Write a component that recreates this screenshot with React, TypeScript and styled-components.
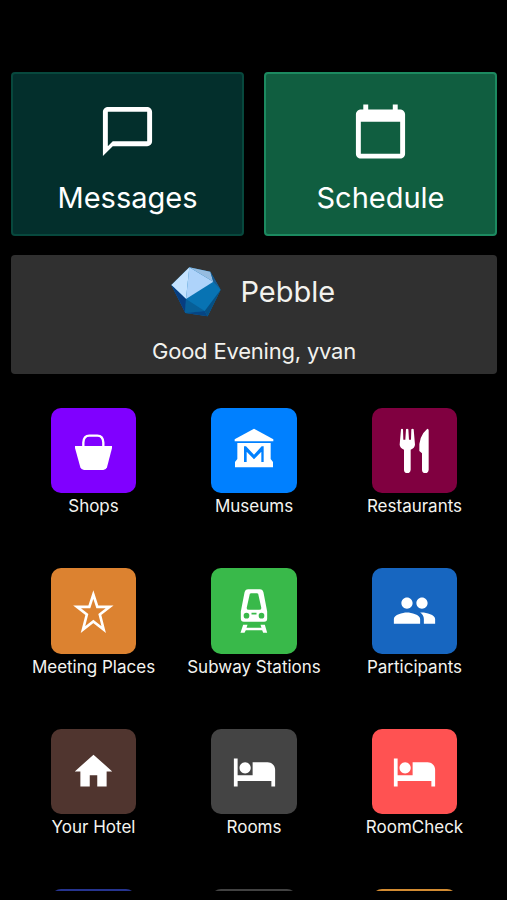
import React from "react";
import styled, { createGlobalStyle } from "styled-components";

const GlobalStyle = createGlobalStyle`
  * { box-sizing: border-box; }
  html, body { margin: 0; background: #000; }
  body { overflow: hidden; }
`;

const Screen = styled.main`
  width: 507px;
  height: 900px;
  padding: 72px 10px 9.5px 11px;
  background: #000;
  color: #fff;
  font-family: Inter, "Liberation Sans", sans-serif;
  display: flex;
  flex-direction: column;
  overflow: hidden;
`;

const CardRow = styled.div`
  display: grid;
  grid-template-columns: 1fr 1fr;
  gap: 20px;
  flex: none;
`;

const Card = styled.button<{ $fill: string; $edge: string }>`
  height: 163.5px;
  padding: 28px 0 0;
  border: 2px solid ${(p) => p.$edge};
  border-radius: 4px;
  background: ${(p) => p.$fill};
  color: #fff;
  font: inherit;
  display: flex;
  flex-direction: column;
  align-items: center;
`;

const CardIcon = styled.svg`
  width: 59px;
  height: 59px;
  fill: #fff;
`;

const CardLabel = styled.span`
  margin-top: 19px;
  font-size: 29px;
  line-height: 36px;
`;

const Assistant = styled.section`
  flex: none;
  height: 118.5px;
  margin-top: 19.5px;
  padding-top: 10.5px;
  border-radius: 4px;
  background: #303030;
  color: #f2f2ee;
  display: flex;
  flex-direction: column;
  align-items: center;
`;

const Brand = styled.div`
  display: flex;
  align-items: center;
  gap: 19px;
  height: 52px;
  margin-right: 1.5px;
`;

const Logo = styled.svg`
  width: 50px;
  height: 50px;
`;

const BrandName = styled.span`
  font-size: 29px;
`;

const Greeting = styled.p`
  margin: 19.5px 0 0;
  font-size: 22px;
  line-height: 28px;
  letter-spacing: -0.2px;
`;

const Apps = styled.nav`
  flex: 1;
  min-height: 0;
  margin: 34px 2px 0;
  display: grid;
  grid-template-columns: repeat(3, 160.5px);
  grid-auto-rows: 160.5px;
  justify-content: center;
  overflow: hidden;
`;

const AppLink = styled.a`
  display: flex;
  flex-direction: column;
  align-items: center;
`;

const Tile = styled.span<{ $fill: string }>`
  width: 85.5px;
  height: 85.5px;
  flex: none;
  border-radius: 10px;
  background: ${(p) => p.$fill};
  display: grid;
  place-items: center;
`;

const TileIcon = styled.svg`
  width: 45px;
  height: 45px;
  fill: #fff;
`;

const AppLabel = styled.span`
  margin-top: 2px;
  font-size: 17px;
  line-height: 22px;
  white-space: nowrap;
  color: #f4f4f0;
`;

const bed = (
  <TileIcon viewBox="0 0 24 24">
    <path d="M7 13c1.66 0 3-1.34 3-3S8.66 7 7 7s-3 1.34-3 3 1.34 3 3 3zm12-6h-8v7H3V5H1v15h2v-3h18v3h2v-9c0-2.21-1.79-4-4-4z" />
  </TileIcon>
);

const apps: { label: string; fill: string; icon?: React.ReactNode }[] = [
  {
    label: "Shops",
    fill: "#8000ff",
    icon: (
      <TileIcon viewBox="93 84 135 135">
        <path d="M105 138H216V144L201 202Q198 210 190 210H132Q124 210 121 202L105 144Z" />
        <path d="M130 141V128Q131 107 148 107H172Q189 107 190 128V141" fill="none" stroke="#fff" strokeWidth="7" />
      </TileIcon>
    ),
  },
  {
    label: "Museums",
    fill: "#0080ff",
    icon: (
      <TileIcon viewBox="96 84 135 135">
        <path d="M162 86L220 118V124H104V118Z" />
        <path
          fillRule="evenodd"
          d="M112 129H212V177L219 186V202H105V186L112 177ZM132 186H140V155L162 178L184 155V186H191V139H185L162 164L138 139H132Z"
        />
      </TileIcon>
    ),
  },
  {
    label: "Restaurants",
    fill: "#800040",
    icon: (
      <TileIcon viewBox="96 84 135 135">
        <path d="M123 88Q126 84 129 88L130 119H136L138 88Q141 84 145 88L147 119H153L154 88Q158 84 161 88L165 134Q164 144 152 149V209Q151 219 142 219Q132 219 132 209V149Q120 144 119 134Z" />
        <path d="M202 86Q206 86 206 91V209Q205 219 196 219Q186 219 186 209V160L178 153Q174 109 202 86Z" />
      </TileIcon>
    ),
  },
  {
    label: "Meeting Places",
    fill: "#dc8230",
    icon: (
      <TileIcon viewBox="153 83.5 135 135">
        <path
          d="M220 103L232 140H269L239.500 163L251 208L220 184L189 208L200.500 163L171 140H208Z"
          fill="none"
          stroke="#fff"
          strokeWidth="8"
        />
      </TileIcon>
    ),
  },
  {
    label: "Subway Stations",
    fill: "#39b94a",
    icon: (
      <TileIcon viewBox="156.500 83.500 135 135">
        <path
          fillRule="evenodd"
          d="M205 87H240Q249 87 251 97L262 154V176Q262 185 253 185H192Q183 185 183 176V154L194 97Q196 87 205 87ZM210 101L201 141Q199 149 207 149H238Q246 149 244 141L235 101Q234 99 231 99H214Q211 99 210 101ZM200 158A8.500 8.500 0 1 0 200 175A8.500 8.500 0 1 0 200 158ZM245 158A8.500 8.500 0 1 0 245 175A8.500 8.500 0 1 0 245 158ZM215 158V163H230V158Z"
        />
        <path d="M190 194H203L200 203H245L242 194H255L262 218H250L247 210H198L194 218H182Z" />
      </TileIcon>
    ),
  },
  {
    label: "Participants",
    fill: "#1766c0",
    icon: (
      <TileIcon viewBox="0 0 24 24">
        <path d="M16 11c1.66 0 2.990-1.340 2.990-3S17.660 5 16 5s-3 1.340-3 3 1.340 3 3 3zm-8 0c1.660 0 2.990-1.340 2.990-3S9.660 5 8 5 5 6.340 5 8s1.340 3 3 3zm0 2c-2.330 0-7 1.170-7 3.500V19h14v-2.500c0-2.330-4.670-3.500-7-3.500zm8 0c-.29 0-.62.02-.97.05 1.160.84 1.970 1.970 1.970 3.450V19h6v-2.500c0-2.330-4.670-3.500-7-3.500z" />
      </TileIcon>
    ),
  },
  {
    label: "Your Hotel",
    fill: "#50352f",
    icon: (
      <TileIcon viewBox="0 0 24 24">
        <path d="M10 20v-6h4v6h5v-8h3L12 3 2 12h3v8z" />
      </TileIcon>
    ),
  },
  { label: "Rooms", fill: "#444444", icon: bed },
  { label: "RoomCheck", fill: "#ff5252", icon: bed },
  { label: "", fill: "#26348f" },
  { label: "", fill: "#424242" },
  { label: "", fill: "#d28b32" },
];

export default function App() {
  return (
    <Screen>
      <GlobalStyle />
      <CardRow>
        <Card $fill="#032f2c" $edge="#07483d">
          <CardIcon viewBox="0 0 24 24">
            <path d="M20 2H4c-1.100 0-2 .9-2 2v18l4-4h14c1.100 0 2-.9 2-2V4c0-1.100-.9-2-2-2zm0 14H6l-2 2V4h16v12z" />
          </CardIcon>
          <CardLabel>Messages</CardLabel>
        </Card>
        <Card $fill="#105e40" $edge="#1c8a60">
          <CardIcon viewBox="0 0 24 24">
            <path d="M20 3h-1V1h-2v2H7V1H5v2H4c-1.100 0-2 .9-2 2v16c0 1.100.9 2 2 2h16c1.100 0 2-.9 2-2V5c0-1.100-.9-2-2-2zm0 18H4V8h16v13z" />
          </CardIcon>
          <CardLabel>Schedule</CardLabel>
        </Card>
      </CardRow>
      <Assistant>
        <Brand>
          <Logo viewBox="125 49 150 150">
            <path d="M180 50L243 63L274 117L235 197L168 187L126 103Z" fill="#0873b3" />
            <path d="M126 103L180 50L170 145Z" fill="#c5e3ff" />
            <path d="M180 50L252 93L170 145Z" fill="#aed3fa" />
            <path d="M180 50L243 63L252 93Z" fill="#96bce0" />
            <path d="M243 63L274 117L252 93Z" fill="#195b91" />
            <path d="M126 103L170 145L168 187Z" fill="#073d80" />
            <path d="M170 145L168 187L226 181Z" fill="#075f98" />
            <path d="M168 187L226 181L235 197Z" fill="#064583" />
            <path d="M274 117L235 197L226 181Z" fill="#065084" />
          </Logo>
          <BrandName>Pebble</BrandName>
        </Brand>
        <Greeting>Good Evening, yvan</Greeting>
      </Assistant>
      <Apps>
        {apps.map((app, i) => (
          <AppLink key={i}>
            <Tile $fill={app.fill}>{app.icon}</Tile>
            {app.label && <AppLabel>{app.label}</AppLabel>}
          </AppLink>
        ))}
      </Apps>
    </Screen>
  );
}
